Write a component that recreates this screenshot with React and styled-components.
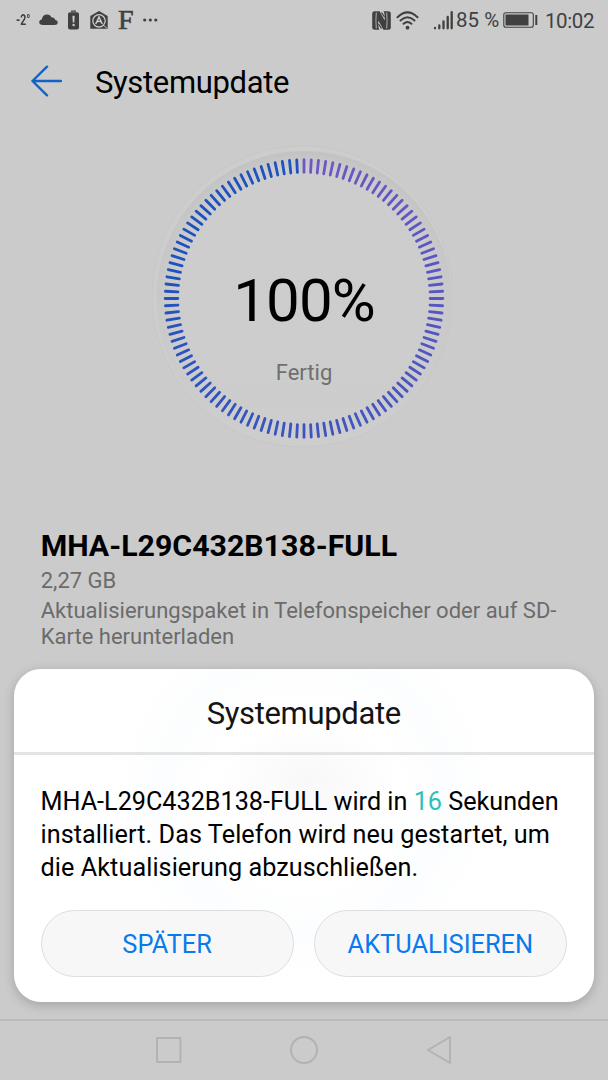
import React from "react";
import styled, { createGlobalStyle } from "styled-components";

const GlobalStyle = createGlobalStyle`
  *, *::before, *::after { box-sizing: border-box; }
  body { margin: 0; background: #cbcbcb; font-family: Roboto, "Liberation Sans", sans-serif; }
`;

const Screen = styled.div`
  position: relative;
  display: flex;
  flex-direction: column;
  width: 608px;
  height: 1080px;
  overflow: hidden;
  background: #cbcbcb;
  color: #000;
`;

const StatusBar = styled.header`
  display: flex;
  justify-content: space-between;
  height: 40px;
  padding: 0 14px 0 16px;
  color: #404040;
`;

const StatusGroup = styled.div`
  display: flex;
  align-items: center;
  height: 40px;
`;

const Temperature = styled.span`
  width: 23px;
  font-size: 15px;
  font-weight: 700;
  transform: scaleX(0.7);
  transform-origin: left;
`;

const StatusText = styled.span`
  font-size: 20.5px;
  line-height: 40px;
  white-space: nowrap;
  width: ${(p) => p.$width}px;
  letter-spacing: ${(p) => p.$spacing || 0}px;
  padding-top: ${(p) => p.$drop || 0}px;
`;

const SerifLetter = styled.span`
  width: 25px;
  font-family: "Liberation Serif", serif;
  font-size: 28px;
  line-height: 40px;
  -webkit-text-stroke: 0.6px #404040;
`;

const Icon = styled.svg`
  display: block;
  flex: none;
  margin-right: ${(p) => p.$gap || 0}px;
`;

const AppBar = styled.div`
  display: flex;
  align-items: center;
  height: 82px;
  padding: 0 0 0 31px;
`;

const PageTitle = styled.h1`
  margin: 4px 0 0 33px;
  font-size: 31px;
  font-weight: 400;
  line-height: 40px;
  letter-spacing: -0.35px;
`;

const ProgressArea = styled.section`
  display: grid;
  justify-items: center;
  height: 406px;
  padding-top: 16px;
`;

const Dial = styled.div`
  display: grid;
  width: 320px;
  height: 320px;
  > * { grid-area: 1 / 1; }
`;

const DialLabels = styled.div`
  display: flex;
  flex-direction: column;
  align-items: center;
  padding-top: 128px;
`;

const Percent = styled.div`
  font-size: 60px;
  line-height: 70px;
  letter-spacing: -0.9px;
`;

const DialState = styled.div`
  margin-top: 24px;
  font-size: 22px;
  line-height: 26px;
  color: #6f6f6f;
`;

const PackageInfo = styled.section`
  padding: 0 40px 0 40.7px;
`;

const PackageName = styled.h2`
  margin: 0;
  font-size: 30.3px;
  font-weight: 700;
  line-height: 35px;
`;

const PackageLine = styled.p`
  margin: ${(p) => p.$top}px 0 0;
  font-size: 22px;
  line-height: 26px;
  color: #6b6b6b;
`;

const Dialog = styled.section`
  position: absolute;
  left: 13.5px;
  top: 669px;
  width: 580.5px;
  height: 333px;
  border-radius: 27px;
  background:
    radial-gradient(ellipse 90px 60px at 295px 112px, #f8f8f8, rgba(248, 248, 248, 0) 100%),
    radial-gradient(circle at 290px 125px, #fff 90px, #fcfdfe 140px, #fff 190px);
  box-shadow: 0 3px 12px rgba(0, 0, 0, 0.2);
`;

const DialogTitle = styled.h2`
  height: 86px;
  margin: 0;
  padding-top: 5px;
  border-bottom: 3px solid #e4e4e4;
  font-size: 31px;
  font-weight: 400;
  line-height: 80px;
  letter-spacing: -0.35px;
  text-align: center;
  color: #141414;
`;

const DialogText = styled.p`
  margin: 30px 0 0;
  padding: 0 27px;
  font-size: 25.2px;
  line-height: 33px;
  white-space: nowrap;
  letter-spacing: 0.08px;
  &::first-line { letter-spacing: 0; }
`;

const Countdown = styled.span`
  color: #2fc0ba;
`;

const Actions = styled.div`
  display: grid;
  grid-template-columns: 1fr 1fr;
  gap: 20px;
  padding: 26px 27px 0;
`;

const ActionButton = styled.button`
  height: 67px;
  padding: 2px 0 0;
  border: 1px solid #dedede;
  border-radius: 34px;
  background: #f7f7f7;
  font: 400 25.4px/63px Roboto, sans-serif;
  color: #087aec;
`;

const NavBar = styled.nav`
  display: flex;
  justify-content: center;
  align-items: center;
  gap: 107px;
  height: 61px;
  margin-top: auto;
  padding-bottom: 1px;
  border-top: 2px solid #bababa;
`;

const TICKS = 120;
const BLUE = [31, 82, 190];
const VIOLET = [112, 88, 196];

function tickColor(index) {
  const t = index / (TICKS - 1);
  const [r, g, b] = VIOLET.map((v, i) => Math.round(v + (BLUE[i] - v) * Math.min(1, t * 1.25)));
  return `rgb(${r},${g},${b})`;
}

function ProgressDial() {
  return (
    <Dial>
      <svg width="320" height="320" viewBox="0 0 320 320">
        <defs>
          <radialGradient id="rim">
            <stop offset="0.88" stopColor="#cdcdcd" />
            <stop offset="1" stopColor="#c1c1c1" />
          </radialGradient>
          <linearGradient id="rimFade" x1="0" y1="0" x2="0" y2="1">
            <stop offset="0" stopColor="#fff" />
            <stop offset="0.85" stopColor="#000" />
          </linearGradient>
          <mask id="rimMask"><rect width="320" height="320" fill="url(#rimFade)" /></mask>
        </defs>
        <circle cx="158.500" cy="158.500" r="150.500" fill="#cdcdcd" stroke="#c6c6c6" strokeWidth="0.900" />
        <circle cx="160" cy="160.500" r="147.500" fill="#cdcdcd" />
        <circle cx="160" cy="160.500" r="147.500" fill="url(#rim)" mask="url(#rimMask)" />
        {Array.from({ length: TICKS }, (_, i) => (
          <line
            key={i}
            x1="160" x2="160" y1="21.700" y2="34.300"
            stroke={tickColor(i)}
            strokeWidth="2.800"
            strokeLinecap="round"
            transform={`rotate(${i * 3} 160 160.5)`}
          />
        ))}
      </svg>
      <DialLabels>
        <Percent>100%</Percent>
        <DialState>Fertig</DialState>
      </DialLabels>
    </Dial>
  );
}

function StatusLeft() {
  return (
    <StatusGroup>
      <Temperature>-2°</Temperature>
      <Icon width="19" height="12" viewBox="0 0 19 12" $gap={10}>
        <path d="M4 11C1.500 11 .2 9.900.2 8.200.2 6.500 1.300 5.600 2.800 5.400 3.300 2.500 5.200.6 8 .6c2.200 0 3.700 1 4.600 3 2.100-.3 3.300.7 3.600 2.500 1.600.2 2.500 1.100 2.500 2.400C18.700 10.200 17.500 11 15.500 11z" fill="#404040" />
      </Icon>
      <Icon width="11" height="20" viewBox="0 0 11 20" $gap={11}>
        <path d="M3 .5h5v1.200H3zM2 2.200h7Q11 2.200 11 4.200V17.500Q11 19.500 9 19.500H2Q0 19.500 0 17.500V4.200Q0 2.200 2 2.200z" fill="#404040" />
        <path d="M4.400 5.800h2.300l-.4 6.700H4.800z" fill="#cbcbcb" />
        <circle cx="5.600" cy="15" r="1.200" fill="#cbcbcb" />
      </Icon>
      <Icon width="18" height="20" viewBox="0 0 18 20" $gap={10}>
        <path d="M9 1 17.700 6V18.800H.3V6z" fill="#404040" />
        <circle cx="9" cy="10.800" r="6.200" fill="none" stroke="#cbcbcb" strokeWidth="1.300" />
        <path d="M5.700 14 9 7l3.300 7M6.800 11.900Q9 10.800 11.200 11.900" fill="none" stroke="#cbcbcb" strokeWidth="1.500" />
        <path d="m13 15 4 3.200" stroke="#cbcbcb" strokeWidth="0.900" />
      </Icon>
      <SerifLetter>F</SerifLetter>
      <Icon width="15" height="4" viewBox="0 0 15 4">
        <circle cx="1.700" cy="2" r="1.600" fill="#404040" />
        <circle cx="7.300" cy="2" r="1.600" fill="#404040" />
        <circle cx="12.800" cy="2" r="1.600" fill="#404040" />
      </Icon>
    </StatusGroup>
  );
}

function StatusRight() {
  return (
    <StatusGroup>
      <Icon width="19" height="19" viewBox="0 0 19 19" $gap={5}>
        <rect x=".2" y=".3" width="18.600" height="18.400" rx="2.500" fill="#404040" />
        <path d="M4.300 1.500Q3.500 9.500 4.300 17.500M14.700 1.500Q15.500 9.500 14.700 17.500" fill="none" stroke="#cbcbcb" strokeWidth="0.800" />
        <path d="M7.500 0 12.700 9.500V5Q12.700 2 11.500 0zM6.300 9.500V14Q6.300 17 7.500 19h4z" fill="#cbcbcb" />
        <path d="M9.500 1.500 12.500 6M6.500 13 9.500 17.500" stroke="#404040" strokeWidth="1.300" />
      </Icon>
      <Icon width="23" height="19" viewBox="0 0 23 19" $gap={14}>
        <g fill="none" stroke="#404040" strokeWidth="2" strokeLinecap="round">
          <path d="M1.500 6.200Q11.500-3.400 21.500 6.200" />
          <path d="M4.500 9.500Q11.500 3 18.500 9.500" />
          <path d="M7.500 12.800Q11.500 9.200 15.500 12.800" />
        </g>
        <circle cx="11.500" cy="16.700" r="1.900" fill="#404040" />
      </Icon>
      <Icon width="20" height="20" viewBox="0 0 20 20" $gap={3}>
        <g stroke="#404040" strokeWidth="2.300" strokeLinecap="round">
          <path d="M2 18.300v-.4M6.300 18.300v-3M10.500 18.300V11.500M14.700 18.300V7M18.700 18.300V2.200" />
        </g>
      </Icon>
      <StatusText $width={47}>85 %</StatusText>
      <Icon width="36" height="16" viewBox="0 0 36 16" $gap={6}>
        <rect x=".8" y=".8" width="29.500" height="14.400" rx="2" fill="none" stroke="#404040" strokeWidth="1.100" />
        <rect x="2.500" y="2.500" width="23" height="11" fill="#404040" />
        <path d="M33.300 3v10" stroke="#404040" strokeWidth="2" />
      </Icon>
      <StatusText $width={49} $spacing={-0.4} $drop={2}>10:02</StatusText>
    </StatusGroup>
  );
}

export default function App() {
  return (
    <>
      <GlobalStyle />
      <Screen>
        <StatusBar>
          <StatusLeft />
          <StatusRight />
        </StatusBar>
        <AppBar>
          <Icon width="31" height="32" viewBox="0 0 31 32" fill="none" stroke="#1264c4" strokeWidth="2.400" strokeLinecap="round" strokeLinejoin="round">
            <path d="M30 16H1.500M16 1.700 1.500 16 16 30.300" />
          </Icon>
          <PageTitle>Systemupdate</PageTitle>
        </AppBar>
        <ProgressArea>
          <ProgressDial />
        </ProgressArea>
        <PackageInfo>
          <PackageName>MHA-L29C432B138-FULL</PackageName>
          <PackageLine $top={5}>2,27 GB</PackageLine>
          <PackageLine $top={4}>
            Aktualisierungspaket in Telefonspeicher oder auf SD-
            <br />
            Karte herunterladen
          </PackageLine>
        </PackageInfo>
        <NavBar>
          <Icon width="28" height="32" viewBox="0 0 28 32" fill="none" stroke="#b2b2b2" strokeWidth="2">
            <rect x="2" y="4" width="23.500" height="24" rx="0.500" />
          </Icon>
          <Icon width="28" height="32" viewBox="0 0 28 32" fill="none" stroke="#b2b2b2" strokeWidth="2">
            <circle cx="14" cy="16" r="13" />
          </Icon>
          <Icon width="28" height="32" viewBox="0 0 28 32" fill="none" stroke="#b2b2b2" strokeWidth="2" strokeLinejoin="round">
            <path d="M25 3v26L3 16z" />
          </Icon>
        </NavBar>
        <Dialog role="dialog">
          <DialogTitle>Systemupdate</DialogTitle>
          <DialogText>
            MHA-L29C432B138-FULL wird in <Countdown>16</Countdown> Sekunden
            <br />
            installiert. Das Telefon wird neu gestartet, um
            <br />
            die Aktualisierung abzuschließen.
          </DialogText>
          <Actions>
            <ActionButton>SPÄTER</ActionButton>
            <ActionButton>AKTUALISIEREN</ActionButton>
          </Actions>
        </Dialog>
      </Screen>
    </>
  );
}
